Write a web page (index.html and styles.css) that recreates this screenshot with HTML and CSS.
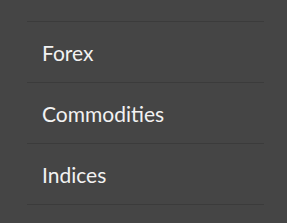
FILE: index.html
```html
<!DOCTYPE html>
<html lang="en">
<head>
  <meta charset="UTF-8" />
  <meta name="viewport" content="width=device-width, initial-scale=1" />
  <title>Markets</title>
  <link rel="stylesheet" href="styles.css">
</head>
<body>

<ul class="menu">
  <li><a href="#">Forex</a></li>
  <li><a href="#">Commodities</a></li>
  <li><a href="#">Indices</a></li>
</ul>

</body>
</html>
```
FILE: styles.css
```css
body {
  font-family: Lato, 'Open Sans', sans-serif;
  background: #454545;
  color: #f2f2f2;
  margin: 0;
  padding: 21px 23px 0 27px;
}
.menu {
  list-style: none;
  margin: 0;
  padding: 0;
  border-bottom: 1px solid #3b3b3b;
}
.menu li {
  border-top: 1px solid #3b3b3b;
}
.menu a {
  display: flex;
  align-items: center;
  height: 60px;
  padding-left: 15px;
  color: #f2f2f2;
  text-decoration: none;
  font-size: 21px;
}
```
